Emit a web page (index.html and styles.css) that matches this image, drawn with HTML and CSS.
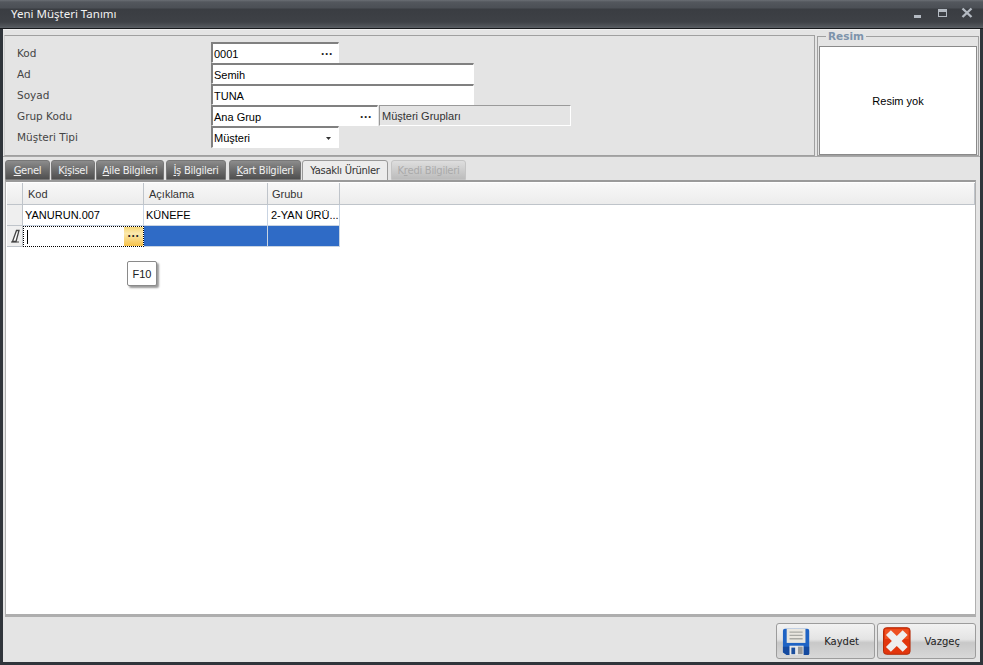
FILE: index.html
```html
<!DOCTYPE html>
<html lang="tr">
<head>
    <meta charset="UTF-8">
    <title>Yeni Müşteri Tanımı</title>
    <link rel="stylesheet" href="styles.css">
</head>
<body>
<section class="window">
    <header class="titlebar">
        <span class="title">Yeni Müşteri Tanımı</span>
        <div class="winbtns">
            <svg width="12" height="12" viewBox="0 0 12 12"><rect x="1" y="8" width="7" height="3" fill="#b4bac2"/></svg>
            <svg width="12" height="12" viewBox="0 0 12 12"><path d="M1 2h9v8H1z" fill="#b4bac2"/><path d="M2 5h7v4H2z" fill="#3d4045"/></svg>
            <svg width="12" height="12" viewBox="0 0 12 12"><path d="M1.500 1.500l9 8.500M10.500 1.500l-9 8.500" stroke="#b4bac2" stroke-width="2.400" fill="none"/></svg>
        </div>
    </header>
    <div class="content">
        <div class="top">
            <div class="form">
                <label class="lbl">Kod</label>
                <div class="row"><div class="inp w128"><span>0001</span><i class="dots">···</i></div></div>
                <label class="lbl">Ad</label>
                <div class="row"><div class="inp w263"><span>Semih</span></div></div>
                <label class="lbl">Soyad</label>
                <div class="row"><div class="inp w263"><span>TUNA</span></div></div>
                <label class="lbl">Grup Kodu</label>
                <div class="row"><div class="inp w167"><span>Ana Grup</span><i class="dots">···</i></div><div class="inp readonly"><span>Müşteri Grupları</span></div></div>
                <label class="lbl">Müşteri Tipi</label>
                <div class="row"><div class="inp w128 tall"><span>Müşteri</span><svg class="arrow" width="5" height="3" viewBox="0 0 5 3"><path d="M0 0h5L2.500 3z" fill="#333"/></svg></div></div>
            </div>
            <fieldset class="photo">
                <legend>Resim</legend>
                <div class="photobox">Resim yok</div>
            </fieldset>
        </div>
        <nav class="tabs">
            <a class="tab w45"><u>G</u>enel</a>
            <a class="tab w44">K<u>i</u>şisel</a>
            <a class="tab w68"><u>A</u>ile Bilgileri</a>
            <a class="tab w60"><u>İ</u>ş Bilgileri</a>
            <a class="tab w72"><u>K</u>art Bilgileri</a>
            <a class="tab active w86">Yasaklı Ürünler</a>
            <a class="tab disabled w75">K<u>r</u>edi Bilgileri</a>
        </nav>
        <div class="page">
            <div class="grid">
                <div class="gr head">
                    <div class="c ind"></div>
                    <div class="c kod">Kod</div>
                    <div class="c aciklama">Açıklama</div>
                    <div class="c grubu">Grubu</div>
                    <div class="c rest"></div>
                </div>
                <div class="gr data">
                    <div class="c ind"></div>
                    <div class="c kod">YANURUN.007</div>
                    <div class="c aciklama">KÜNEFE</div>
                    <div class="c grubu">2-YAN ÜRÜ...</div>
                </div>
                <div class="gr data current">
                    <div class="c ind">
                        <svg width="10" height="14" viewBox="0 0 10 14"><path d="M6.500 1.500h2.500L6 12.500H2.500z" fill="#fff" stroke="#444" stroke-width="1.300"/><path d="M1 13h8" stroke="#444"/></svg>
                    </div>
                    <div class="c kod editing"><span class="caret"></span><span class="ebtn">···</span></div>
                    <div class="c aciklama"></div>
                    <div class="c grubu"></div>
                </div>
            </div>
            <div class="tooltip">F10</div>
        </div>
        <footer class="footer">
            <button class="btn">
                <svg width="30" height="29" viewBox="0 0 30 29">
                    <path d="M1 3a2 2 0 0 1 2-2h24a2 2 0 0 1 2 2v24a2 2 0 0 1-2 2H5l-4-3z" fill="#1f63c4"/>
                    <path d="M1 20h28v7a2 2 0 0 1-2 2H5l-4-3z" fill="#154a9f"/>
                    <rect x="5" y="1" width="20" height="15" fill="#e9e6df"/>
                    <path d="M8 4.500h14M8 8h14M8 11.500h14" stroke="#a9a9a4" stroke-width="1.500"/>
                    <rect x="8" y="19" width="15" height="10" fill="#e8e8e8"/>
                    <rect x="10" y="21" width="4" height="7" fill="#1c4f9e"/>
                    <rect x="17" y="20" width="5" height="8" fill="#9a9a9a"/>
                </svg>
                <span>Kaydet</span>
            </button>
            <button class="btn">
                <svg width="28" height="28" viewBox="0 0 28 28">
                    <rect x="0.500" y="0.500" width="27" height="27" rx="3" fill="#e2360d" stroke="#b32a08"/>
                    <path d="M2 2h24v10H2z" fill="#f6622f" opacity=".6"/>
                    <path d="M8 3l6 6 6-6 5 5-6 6 6 6-5 5-6-6-6 6-5-5 6-6-6-6z" fill="#eeeeee"/>
                </svg>
                <span>Vazgeç</span>
            </button>
        </footer>
    </div>
</section>
</body>
</html>
```

FILE: styles.css
```css
*{
    margin: 0;
    padding: 0;
    box-sizing: border-box;
}
html,body{
    height: 100%;
    overflow: hidden;
}
body{
    font-family: "Liberation Sans", Arial, sans-serif;
    font-size: 11px;
    color: #111;
    background: #2f343a;
}
.window{
    width: 983px;
    height: 665px;
    display: flex;
    flex-direction: column;
    background: #30353b;
    padding: 0 3px 3px;
}
.titlebar{
    height: 29px;
    margin: 0 -3px;
    padding: 0 10px 2px 11px;
    display: flex;
    align-items: center;
    justify-content: space-between;
    border-bottom: 1px solid #17191c;
    background: linear-gradient(#6a6e74 0, #53575d 2px, #4b4f55 8px, #3a3d42 9px, #3e4146 22px, #54585d 27px, #5e6268 28px);
}
.title{
    color: #f2f2f2;
    font-family: "Noto Sans", sans-serif;
    font-size: 11.500px;
}
.winbtns{
    display: flex;
    gap: 12px;
}
.content{
    flex: 1;
    display: flex;
    flex-direction: column;
    background: #e4e4e4;
    min-height: 0;
}
.top{
    height: 127px;
    padding: 5px 1px 0 1px;
    display: flex;
    gap: 2px;
    border-top: 1px solid #efefef;
}
.form{
    width: 811px;
    height: 121px;
    border: 1px solid #a0a0a0;
    border-left-color: #d0d0d0;
    padding: 6px 0 0 12px;
    display: grid;
    grid-template-columns: 194px 1fr;
    grid-auto-rows: 21px;
    background: #e4e4e4;
}
.lbl{
    font-family: "DejaVu Sans", sans-serif;
    font-size: 10.500px;
    color: #444;
    line-height: 23px;
}
.row{
    display: flex;
    gap: 1px;
    height: 21px;
}
.inp{
    height: 21px;
    border: 1px solid #fff;
    border-top: 2px solid #808080;
    border-left: 2px solid #808080;
    background: #fff;
    display: flex;
    align-items: center;
    justify-content: space-between;
    padding: 1px 5px 0 1px;
    color: #000;
    font-size: 11px;
}
.w128{ width: 128px; }
.w263{ width: 263px; }
.w167{ width: 167px; }
.tall{ height: 22px; }
.readonly{
    width: 192px;
    background: #e4e4e4;
    border-color: #fff;
    border-top: 1px solid #9a9a9a;
    border-left: 1px solid #9a9a9a;
    padding-left: 2px;
    color: #333;
}
.dots{
    font-style: normal;
    font-weight: bold;
    font-size: 12px;
    letter-spacing: 0;
    color: #222;
}
.arrow{
    margin-right: 2px;
}
.photo{
    width: 162px;
    height: 126px;
    margin-top: -5px;
    border: 1px solid #a0a0a0;
    padding: 0 1px 1px 1px;
    background: #e4e4e4;
}
.photo legend{
    margin-left: 7px;
    padding: 0 2px;
    font-family: "DejaVu Sans", sans-serif;
    font-size: 10.500px;
    font-weight: bold;
    color: #7d93ab;
    line-height: 12px;
}
.photobox{
    height: 109px;
    margin-top: 4px;
    background: #fff;
    border: 1px solid #8a8a8a;
    display: flex;
    align-items: center;
    justify-content: center;
    color: #000;
}
.tabs{
    height: 24px;
    padding: 3px 0 0 2px;
    display: flex;
    gap: 1px;
    border-top: 1px solid #a8a8a8;
}
.tab{
    height: 20px;
    display: flex;
    align-items: center;
    justify-content: center;
    font-family: "DejaVu Sans", sans-serif;
    font-size: 10px;
    letter-spacing: -0.300px;
    white-space: nowrap;
    color: #f0f0f0;
    border: 1px solid #777;
    border-radius: 3px 3px 0 0;
    background: linear-gradient(#8c8c8c, #6f6f6f 45%, #4f4f4f);
}
.w45{ width: 45px; }
.w44{ width: 44px; }
.w68{ width: 68px; }
.w60{ width: 60px; margin-left: 1px; }
.w72{ width: 72px; margin-left: 2px; }
.w86{ width: 86px; }
.w75{ width: 75px; margin-left: 2px; }
.tab.active{
    background: #ececec;
    color: #333;
    border-color: #999;
    height: 21px;
}
.tab.disabled{
    background: linear-gradient(#dedede, #bcbcbc);
    color: #aaa;
    border-color: #c4c4c4;
}
.page{
    position: relative;
    margin: 0 2px;
    width: 971px;
    height: 437px;
    background: #fff;
    border: 1px solid #b0b0b0;
    border-top: 2px solid #9a9a9a;
    border-bottom: 3px solid #aeaeae;
    padding: 1px 0 0 1px;
}
.gr{
    display: flex;
}
.c{
    border-right: 1px solid #c9d4e2;
    border-bottom: 1px solid #c9d4e2;
    display: flex;
    align-items: center;
    padding-left: 2px;
    color: #000;
    white-space: nowrap;
}
.ind{
    width: 16px;
    padding: 0;
    justify-content: center;
    background: #efefef;
    border-color: #bfc4ca;
}
.kod{ width: 121px; }
.aciklama{ width: 124px; }
.grubu{ width: 72px; padding-left: 3px; }
.rest{ flex: 1; }
.head .c{
    height: 22px;
    background: linear-gradient(#f8f8f8, #ececec);
    border-color: #bfc4ca;
    padding-left: 5px;
    color: #333;
}
.head .grubu{
    padding-left: 4px;
}
.head .ind{
    padding: 0;
}
.data{
    height: 21px;
}
.data .c{
    height: 21px;
}
.current .c{
    background: #2f6bc6;
}
.current .ind{
    background: #efefef;
}
.current .editing{
    background: #fff;
    border: 1px dotted #000;
    padding: 0 0 0 3px;
    justify-content: space-between;
}
.caret{
    width: 1px;
    height: 14px;
    background: #000;
}
.ebtn{
    width: 19px;
    height: 19px;
    font-weight: bold;
    font-size: 12px;
    text-align: center;
    line-height: 19px;
    color: #222;
    background: linear-gradient(#f8d776, #fbe9ae 35%, #f6c24a);
}
.tooltip{
    position: absolute;
    left: 121px;
    top: 79px;
    width: 30px;
    height: 25px;
    background: #fff;
    border: 1px solid #8a8a8a;
    border-radius: 2px;
    box-shadow: 2px 2px 2px #9a9a9a;
    display: flex;
    align-items: center;
    justify-content: center;
    color: #222;
}
.footer{
    flex: 1;
    display: flex;
    justify-content: flex-end;
    align-items: flex-start;
    gap: 2px;
    padding: 6px 4px 0 0;
}
.btn{
    width: 99px;
    height: 36px;
    display: flex;
    align-items: center;
    gap: 14px;
    padding: 0 5px;
    font-family: "DejaVu Sans", sans-serif;
    font-size: 10px;
    color: #222;
    border: 1px solid #9c9c9c;
    border-radius: 3px;
    background: linear-gradient(#f2f2f2, #e4e4e4 45%, #c8c8c8 55%, #d8d8d8);
}
.btn span{
    flex: 1;
    text-align: center;
    padding-right: 10px;
}
```
